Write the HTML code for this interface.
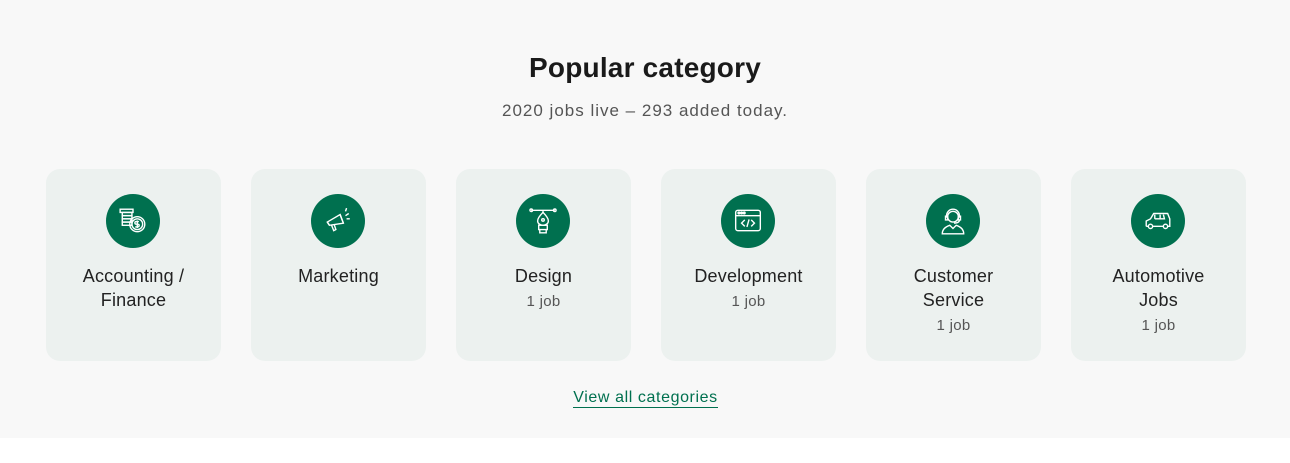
<!DOCTYPE html>
<html><head><style>
body{margin:0;width:1290px;height:463px;background:#fff;font-family:"Liberation Sans",sans-serif;}
.sec{background:#f8f8f8;height:438px;position:relative;}
h2{position:absolute;top:52px;left:0;width:1290px;margin:0;text-align:center;font-size:28px;font-weight:700;color:#1a1a1a;letter-spacing:0.2px;}
.sub{position:absolute;top:101px;width:1290px;text-align:center;font-size:17px;color:#555;letter-spacing:1px;}
.card{position:absolute;top:169px;width:175px;height:192px;background:#ecf1ef;border-radius:14px;text-align:center;}
.ic{position:absolute;left:60px;top:25px;width:54px;height:54px;border-radius:50%;background:#00704f;}
.ic svg{position:absolute;left:12px;top:12px;}
.t{position:absolute;top:95px;left:0;width:175px;font-size:18px;line-height:24px;color:#222;letter-spacing:0.2px;}
.j{display:block;font-size:15px;color:#555;margin-top:2px;letter-spacing:0.3px;}
a{position:absolute;top:388px;left:573px;width:145px;white-space:nowrap;text-align:center;font-size:16px;letter-spacing:0.6px;color:#00704f;text-decoration:none;border-bottom:1px solid #00704f;line-height:19px;}
</style></head><body>
<div class="sec">
<h2>Popular category</h2>
<div class="sub">2020 jobs live – 293 added today.</div>

<div class="card" style="left:46px"><div class="ic"><svg width="30" height="30" viewBox="0 0 28 28" fill="none" stroke="#fff" stroke-width="1.3"><rect x="2" y="3" width="12" height="3"/><rect x="4" y="6" width="9" height="3"/><rect x="4" y="9" width="9" height="3"/><rect x="4" y="12" width="9" height="3"/><rect x="4" y="15" width="9" height="3"/><circle cx="18" cy="17" r="7"/><circle cx="18" cy="17" r="5"/><path d="M19.5 14.5h-2.5a1.2 1.2 0 0 0 0 2.5h1.5a1.2 1.2 0 0 1 0 2.5h-2.5M18 13.5v7"/></svg></div><div class="t">Accounting /<br>Finance</div></div>

<div class="card" style="left:251px"><div class="ic"><svg width="30" height="30" viewBox="0 0 28 28" fill="none" stroke="#fff" stroke-width="1.3"><path d="M4 15l12-7 3 8-13 2z"/><path d="M4 15l2 3"/><path d="M8 18l2 5 2-1-1.5-4.5"/><path d="M16 8l3 8"/><path d="M21 9l3-2M21 5l1-3M22 12l3 0"/></svg></div><div class="t">Marketing</div></div>

<div class="card" style="left:456px"><div class="ic"><svg width="30" height="30" viewBox="0 0 28 28" fill="none" stroke="#fff" stroke-width="1.3"><path d="M3 4h22M14 4v2"/><circle cx="3" cy="4" r="1.2"/><circle cx="25" cy="4" r="1.2"/><path d="M14 6c-3 3-5 6-5 8 0 2 2 4 5 4s5-2 5-4c0-2-2-5-5-8z"/><circle cx="14" cy="13" r="1.2"/><rect x="10" y="18" width="8" height="4"/><path d="M11 22v3h6v-3"/></svg></div><div class="t">Design<span class="j">1 job</span></div></div>

<div class="card" style="left:661px"><div class="ic"><svg width="30" height="30" viewBox="0 0 28 28" fill="none" stroke="#fff" stroke-width="1.3"><rect x="2.5" y="4" width="23" height="19" rx="2"/><path d="M2.5 9h23"/><circle cx="5.5" cy="6.5" r=".8" fill="#fff"/><circle cx="8" cy="6.5" r=".8" fill="#fff"/><circle cx="10.5" cy="6.5" r=".8" fill="#fff"/><path d="M11 13l-3 3 3 3M17 13l3 3-3 3M15 12.5l-2 7"/></svg></div><div class="t">Development<span class="j">1 job</span></div></div>

<div class="card" style="left:866px"><div class="ic"><svg width="30" height="30" viewBox="0 0 28 28" fill="none" stroke="#fff" stroke-width="1.3"><circle cx="14" cy="10" r="5"/><path d="M8 11v-2a6 6 0 0 1 12 0v2"/><rect x="7" y="9.5" width="2" height="3.5"/><rect x="19" y="9.5" width="2" height="3.5"/><path d="M20 13c0 2-2 3-5 3"/><path d="M4 26c0-5 4-7 7-8l3 3 3-3c3 1 7 3 7 8z"/></svg></div><div class="t">Customer<br>Service<span class="j">1 job</span></div></div>

<div class="card" style="left:1071px"><div class="ic"><svg width="30" height="30" viewBox="0 0 28 28" fill="none" stroke="#fff" stroke-width="1.3"><path d="M3 19v-5l4-2 3-5h13l2 5v7h-2M9 19h10M5 19H3"/><circle cx="7" cy="19" r="2"/><circle cx="21" cy="19" r="2"/><path d="M11 8v4M16 8v4M11 12h9l-1-4"/></svg></div><div class="t">Automotive<br>Jobs<span class="j">1 job</span></div></div>

<a>View all categories</a>
</div>
</body></html>
